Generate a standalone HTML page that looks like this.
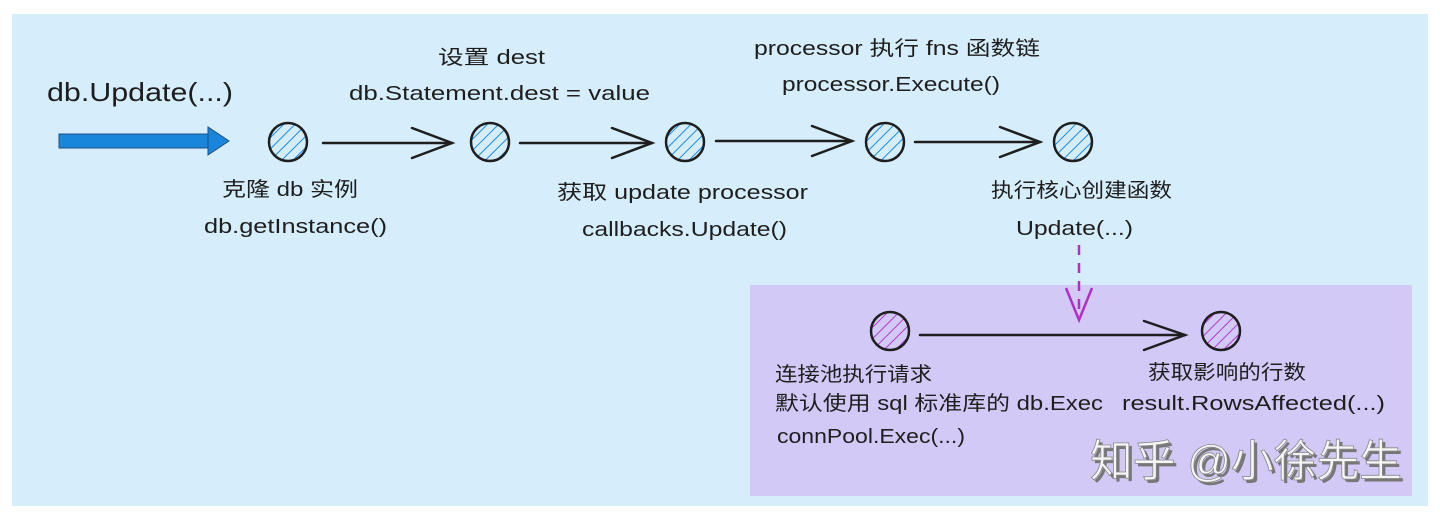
<!DOCTYPE html>
<html><head><meta charset="utf-8"><style>
body{margin:0;background:#fff;}
svg{display:block}
text{font-family:"Liberation Sans","Noto Sans CJK SC",sans-serif;fill:#1e1e1e;font-size:20px}
</style></head><body>
<svg width="1440" height="521" viewBox="0 0 1440 521">
<defs>
<pattern id="hb" patternUnits="userSpaceOnUse" width="8" height="8" patternTransform="rotate(45)"><rect width="8" height="8" fill="#d5ecfb"/><line x1="0" y1="0" x2="0" y2="8" stroke="#1c8ce0" stroke-width="2"/></pattern>
<pattern id="hp" patternUnits="userSpaceOnUse" width="8" height="8" patternTransform="rotate(45)"><rect width="8" height="8" fill="#d3c9f6"/><line x1="0" y1="0" x2="0" y2="8" stroke="#b23ad0" stroke-width="2"/></pattern>
</defs>
<rect x="12" y="14" width="1416" height="492" fill="#d6edfb"/>
<rect x="750" y="285" width="662" height="211" fill="#d2c9f7"/>
<rect x="59" y="134" width="150" height="14" fill="#1a86db" stroke="#1e4f80" stroke-width="1"/>
<polygon points="208,127 229,141 208,155" fill="#1a86db" stroke="#1e4f80" stroke-width="1"/>
<g stroke="#1e1e1e" stroke-width="2.5" fill="none" stroke-linecap="round">
<circle cx="288" cy="142" r="19" fill="url(#hb)"/>
<circle cx="490" cy="142" r="19" fill="url(#hb)"/>
<circle cx="685" cy="142" r="19" fill="url(#hb)"/>
<circle cx="885" cy="142" r="19" fill="url(#hb)"/>
<circle cx="1073" cy="142" r="19" fill="url(#hb)"/>
<line x1="323" y1="143" x2="452" y2="143"/><polyline points="412,128 452,143 412,158"/>
<line x1="520" y1="143" x2="652" y2="143"/><polyline points="612,128 652,143 612,158"/>
<line x1="716" y1="141" x2="852" y2="141"/><polyline points="812,126 852,141 812,156"/>
<line x1="915" y1="142" x2="1040" y2="142"/><polyline points="1000,127 1040,142 1000,157"/>
<circle cx="890" cy="331" r="19" fill="url(#hp)"/>
<circle cx="1221" cy="331" r="19" fill="url(#hp)"/>
<line x1="920" y1="335" x2="1185" y2="335"/><polyline points="1144,321 1185,335 1144,350"/>
</g>
<g stroke="#b02fc8" stroke-width="2.5" fill="none">
<line x1="1079" y1="245" x2="1079" y2="318" stroke-dasharray="10,8"/>
<polyline points="1066,288 1079,320 1092,288"/>
</g>
<text x="47" y="101" style="font-size:26px" textLength="186" lengthAdjust="spacingAndGlyphs">db.Update(...)</text>
<text x="438" y="64" textLength="107" lengthAdjust="spacingAndGlyphs">设置 dest</text>
<text x="349" y="100" textLength="301" lengthAdjust="spacingAndGlyphs">db.Statement.dest = value</text>
<text x="754" y="55" textLength="286" lengthAdjust="spacingAndGlyphs">processor 执行 fns 函数链</text>
<text x="782" y="91" textLength="218" lengthAdjust="spacingAndGlyphs">processor.Execute()</text>
<text x="222" y="196" textLength="136" lengthAdjust="spacingAndGlyphs">克隆 db 实例</text>
<text x="204" y="233" textLength="183" lengthAdjust="spacingAndGlyphs">db.getInstance()</text>
<text x="557" y="199" textLength="251" lengthAdjust="spacingAndGlyphs">获取 update processor</text>
<text x="582" y="236" textLength="205" lengthAdjust="spacingAndGlyphs">callbacks.Update()</text>
<text x="991" y="197" textLength="181" lengthAdjust="spacingAndGlyphs">执行核心创建函数</text>
<text x="1016" y="235" textLength="117" lengthAdjust="spacingAndGlyphs">Update(...)</text>
<text x="775" y="381" textLength="157" lengthAdjust="spacingAndGlyphs">连接池执行请求</text>
<text x="775" y="410" textLength="328" lengthAdjust="spacingAndGlyphs">默认使用 sql 标准库的 db.Exec</text>
<text x="777" y="443" textLength="188" lengthAdjust="spacingAndGlyphs">connPool.Exec(...)</text>
<text x="1148" y="379" textLength="158" lengthAdjust="spacingAndGlyphs">获取影响的行数</text>
<text x="1122" y="410" textLength="263" lengthAdjust="spacingAndGlyphs">result.RowsAffected(...)</text>
<text x="1093" y="479" style="font-size:44px;fill:#777" textLength="312" lengthAdjust="spacingAndGlyphs">知乎 @小徐先生</text>
<text x="1090" y="476" style="font-size:44px;fill:#f6f6f6;stroke:#888;stroke-width:0.8" textLength="312" lengthAdjust="spacingAndGlyphs">知乎 @小徐先生</text>
</svg>
</body></html>
